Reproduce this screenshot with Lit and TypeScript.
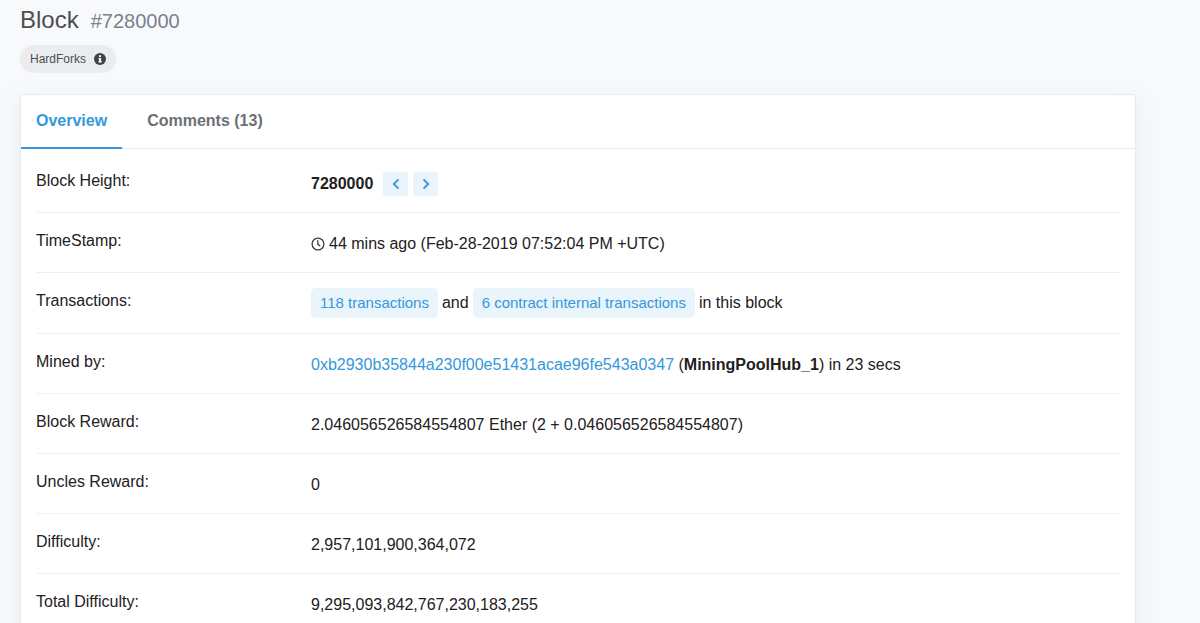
import { LitElement, html, css } from "lit";
import { customElement } from "lit/decorators.js";

@customElement("detail-row")
export class DetailRow extends LitElement {
  static properties = { label: { type: String } };
  declare label: string;

  static styles = css`
    :host {
      display: grid;
      grid-template-columns: minmax(120px, 275px) minmax(0, 1fr);
      align-items: start;
      padding: 15px 0 16px;
      border-bottom: 1px solid #edf0f8;
    }
    .label {
      line-height: 24px;
      padding-top: 1px;
    }
    .value {
      display: flex;
      flex-wrap: wrap;
      align-items: center;
      line-height: 24px;
      padding-top: 4px;
      overflow-wrap: anywhere;
    }
    :host([chips]) {
      padding-bottom: 15px;
    }
    :host([chips]) .value {
      padding-top: 0;
    }
  `;

  render() {
    return html`
      <div class="label">${this.label}</div>
      <div class="value"><slot></slot></div>
    `;
  }
}

@customElement("app-root")
export class AppRoot extends LitElement {
  static styles = css`
    :host {
      display: block;
      box-sizing: border-box;
      height: 100vh;
      overflow: hidden;
      padding: 6px 64px 0 20px;
      background: #f8f9fb;
      color: #1e2022;
      font: 16px/24px "Liberation Sans", Arial, sans-serif;
    }
    a {
      color: #3498db;
      text-decoration: none;
    }
    h1 {
      display: flex;
      align-items: baseline;
      gap: 12px;
      margin: 0 0 10px;
      font-size: 24px;
      line-height: 28px;
      font-weight: 400;
      color: #4a4f55;
    }
    .number {
      font-size: 20px;
      color: #77838f;
    }
    .tag {
      display: inline-flex;
      align-items: center;
      gap: 8px;
      height: 28px;
      padding: 0 10px;
      border: 0;
      border-radius: 14px;
      background: #ebecef;
      color: #4a4f55;
      font: 12px/16px "Liberation Sans", Arial, sans-serif;
    }
    .tag svg {
      width: 12px;
      height: 12px;
    }
    .card {
      margin-top: 21px;
      min-height: 600px;
      background: #fff;
      border: 1px solid #e7eaf3;
      border-radius: 4px;
      box-shadow: 0 8px 19px rgba(189, 197, 209, 0.25);
    }
    .tabs {
      display: flex;
      gap: 10px;
      border-bottom: 1px solid #e7eaf3;
    }
    .tabs a {
      padding: 14px 15px;
      margin-bottom: -1px;
      border-bottom: 2px solid transparent;
      font-weight: 700;
      color: #6c7075;
    }
    .tabs .active {
      color: #3498db;
      border-color: #3498db;
    }
    .rows {
      padding: 4px 15px 0;
    }
    .step {
      display: inline-flex;
      align-items: center;
      justify-content: center;
      width: 25px;
      height: 24px;
      margin-left: 5px;
      border-radius: 3px;
      background: #e9f4fb;
    }
    .height {
      margin-right: 5px;
    }
    .step svg {
      width: 12px;
      height: 12px;
    }
    .clock {
      width: 14px;
      height: 14px;
      margin-right: 4px;
    }
    .chip {
      padding: 3px 9px;
      border-radius: 5px;
      background: #e9f4fb;
      font-size: 15px;
    }
    .word {
      margin: 0 4px;
    }
    .text {
      white-space: pre-wrap;
    }
  `;

  render() {
    return html`
      <h1>Block <span class="number">#7280000</span></h1>
      <button class="tag" type="button">
        HardForks
        <svg viewBox="0 0 12 12" aria-hidden="true">
          <circle cx="6" cy="6" r="6" fill="#3f444a" />
          <path
            d="M5 2.2h2v1.7H5zM4.5 5h2.6v3.2h.6v1.3H4.4V8.2H5V6.2h-.5z"
            fill="#fff"
          />
        </svg>
      </button>
      <main class="card">
        <nav class="tabs">
          <a class="active" href="#overview">Overview</a>
          <a href="#comments">Comments (13)</a>
        </nav>
        <div class="rows">
          <detail-row label="Block Height:">
            <b class="height">7280000</b>
            <a class="step" href="#previous" aria-label="Previous block">
              <svg viewBox="0 0 12 12" fill="none" stroke="#3498db" stroke-width="1.9">
                <path d="M8.5 1.3 3.8 6l4.7 4.7" />
              </svg>
            </a>
            <a class="step" href="#next" aria-label="Next block">
              <svg viewBox="0 0 12 12" fill="none" stroke="#3498db" stroke-width="1.9">
                <path d="M3.5 1.3 8.2 6l-4.7 4.7" />
              </svg>
            </a>
          </detail-row>
          <detail-row label="TimeStamp:">
            <svg class="clock" viewBox="0 0 14 14" fill="none" stroke="#3a3d40" stroke-width="1.3">
              <circle cx="7" cy="7" r="5.9" />
              <path d="M6.8 3.3v4l2.4 1.7" />
            </svg>
            <span>44 mins ago (Feb-28-2019 07:52:04 PM +UTC)</span>
          </detail-row>
          <detail-row label="Transactions:" chips>
            <a class="chip" href="#transactions">118 transactions</a>
            <span class="word">and</span>
            <a class="chip" href="#internal">6 contract internal transactions</a>
            <span class="word">in this block</span>
          </detail-row>
          <detail-row label="Mined by:">
            <span class="text"><a href="#miner">0xb2930b35844a230f00e51431acae96fe543a0347</a> (<b>MiningPoolHub_1</b>) in 23 secs</span>
          </detail-row>
          <detail-row label="Block Reward:">
            <span>2.046056526584554807 Ether (2 + 0.046056526584554807)</span>
          </detail-row>
          <detail-row label="Uncles Reward:"><span>0</span></detail-row>
          <detail-row label="Difficulty:"><span>2,957,101,900,364,072</span></detail-row>
          <detail-row label="Total Difficulty:"><span>9,295,093,842,767,230,183,255</span></detail-row>
        </div>
      </main>
    `;
  }
}
